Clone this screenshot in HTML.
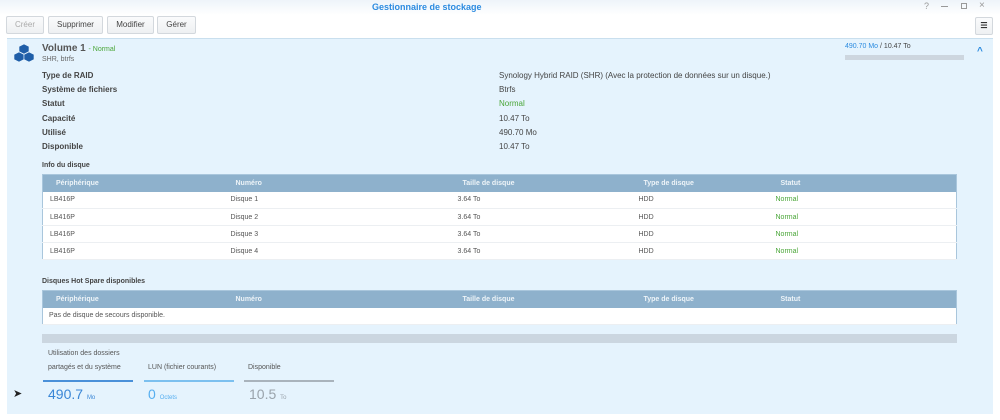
<!DOCTYPE html>
<html><head><meta charset="utf-8"><style>
*{margin:0;padding:0;box-sizing:border-box}
body{width:1000px;height:420px;background:#fff;font-family:"Liberation Sans",Verdana,sans-serif;font-size:8px;color:#444;position:relative;overflow:hidden}
.a{position:absolute;white-space:nowrap}
.top{position:absolute;left:0;top:0;width:1000px;height:15px;background:linear-gradient(#eef4fa,#fff)}
.btn{position:absolute;top:16px;height:18px;border:1px solid #d3d8dd;background:linear-gradient(#fafbfc,#eef0f2);border-radius:2px;font-size:8px;color:#444;text-align:center;line-height:16px}
.panel{position:absolute;left:7px;top:38px;width:986px;height:376px;background:#e5f3fd;border-top:1px solid #c9dfee}
.b{font-weight:bold;color:#444}
table{border-collapse:collapse;position:absolute;left:42px;width:915px;background:#fff;border:1px solid #a9c6dc;font-size:7px;table-layout:fixed}
th{background:#8eb1cc;color:#eef4f8;font-weight:bold;text-align:left;height:17px;padding:0 0 0 5px}
td{height:17px;border-bottom:1px solid #eceff2;padding:0;color:#555}
.g{color:#4aa638}
</style></head><body>
<div class="top"></div>
<div class="a" style="left:372px;top:2px;font-size:9px;font-weight:bold;color:#2c8be0">Gestionnaire de stockage</div>
<div class="a" style="left:924px;top:1px;color:#999;font-size:9px">?</div>
<div class="a" style="left:941px;top:6px;width:7px;height:1px;background:#999"></div>
<div class="a" style="left:961px;top:3px;width:6px;height:6px;border:1px solid #999"></div>
<div class="a" style="left:979px;top:0px;color:#999;font-size:10px">×</div>
<div class="btn" style="left:6px;width:38px;color:#aaa">Créer</div>
<div class="btn" style="left:48px;width:55px">Supprimer</div>
<div class="btn" style="left:107px;width:47px">Modifier</div>
<div class="btn" style="left:157px;width:39px">Gérer</div>
<div class="btn" style="left:975px;width:18px;top:17px;font-weight:bold;color:#333">☰</div>
<div class="panel"></div>
<svg class="a" style="left:13px;top:44px" width="22" height="20" viewBox="0 0 22 20"><g fill="#1f5ea8" stroke="#e5f3fd" stroke-width="0.6"><path d="M11 0l5 2.5v5l-5 2.5-5-2.5v-5z"/><path d="M6 8l5 2.5v5l-5 2.5-5-2.5v-5z"/><path d="M16 8l5 2.5v5l-5 2.5-5-2.5v-5z"/></g></svg>
<div class="a" style="left:42px;top:43px;font-size:10px;font-weight:bold;color:#555">Volume 1 <span style="font-size:7px;color:#4aa638;font-weight:normal">- Normal</span></div>
<div class="a" style="left:42px;top:56px;color:#666;font-size:7px">SHR, btrfs</div>
<div class="a b" style="left:42px;top:71px">Type de RAID</div>
<div class="a b" style="left:42px;top:85px">Système de fichiers</div>
<div class="a b" style="left:42px;top:99px">Statut</div>
<div class="a b" style="left:42px;top:114px">Capacité</div>
<div class="a b" style="left:42px;top:128px">Utilisé</div>
<div class="a b" style="left:42px;top:142px">Disponible</div>
<div class="a" style="left:499px;top:71px">Synology Hybrid RAID (SHR) (Avec la protection de données sur un disque.)</div>
<div class="a" style="left:499px;top:85px">Btrfs</div>
<div class="a g" style="left:499px;top:99px">Normal</div>
<div class="a" style="left:499px;top:114px">10.47 To</div>
<div class="a" style="left:499px;top:128px">490.70 Mo</div>
<div class="a" style="left:499px;top:142px">10.47 To</div>
<div class="a" style="left:845px;top:43px;font-size:7px"><span style="color:#2c8be0">490.70 Mo</span> / 10.47 To</div>
<div class="a" style="left:845px;top:55px;width:119px;height:5px;background:#cdd6df"></div>
<div class="a" style="left:977px;top:46px;color:#2c8be0;font-size:10px;font-weight:bold">^</div>
<div class="a b" style="left:42px;top:162px;font-size:7px">Info du disque</div>
<table style="top:174px">
<colgroup><col style="width:188px"><col style="width:227px"><col style="width:181px"><col style="width:137px"><col></colgroup>
<tr><th style="padding-left:13px">Périphérique</th><th>Numéro</th><th>Taille de disque</th><th>Type de disque</th><th>Statut</th></tr>
<tr><td style="padding-left:7px">LB416P</td><td>Disque 1</td><td>3.64 To</td><td>HDD</td><td class="g">Normal</td></tr>
<tr><td style="padding-left:7px">LB416P</td><td>Disque 2</td><td>3.64 To</td><td>HDD</td><td class="g">Normal</td></tr>
<tr><td style="padding-left:7px">LB416P</td><td>Disque 3</td><td>3.64 To</td><td>HDD</td><td class="g">Normal</td></tr>
<tr><td style="padding-left:7px">LB416P</td><td>Disque 4</td><td>3.64 To</td><td>HDD</td><td class="g">Normal</td></tr>
</table>
<div class="a b" style="left:42px;top:278px;font-size:7px">Disques Hot Spare disponibles</div>
<table style="top:290px">
<colgroup><col style="width:188px"><col style="width:227px"><col style="width:181px"><col style="width:137px"><col></colgroup>
<tr><th style="padding-left:13px">Périphérique</th><th>Numéro</th><th>Taille de disque</th><th>Type de disque</th><th>Statut</th></tr>
<tr><td colspan="5" style="padding-left:6px">Pas de disque de secours disponible.</td></tr>
</table>
<div class="a" style="left:42px;top:334px;width:915px;height:9px;background:#cbd6e0"></div>
<div class="a" style="left:48px;top:350px;font-size:7px;color:#555">Utilisation des dossiers</div>
<div class="a" style="left:48px;top:364px;font-size:7px;color:#555">partagés et du système</div>
<div class="a" style="left:148px;top:364px;font-size:7px;color:#555">LUN (fichier courants)</div>
<div class="a" style="left:248px;top:364px;font-size:7px;color:#555">Disponible</div>
<div class="a" style="left:43px;top:380px;width:90px;height:2px;background:#4a90d9"></div>
<div class="a" style="left:144px;top:380px;width:90px;height:2px;background:#7cc0ef"></div>
<div class="a" style="left:244px;top:380px;width:90px;height:2px;background:#a9b3bc"></div>
<div class="a" style="left:48px;top:386px;font-size:14px;color:#3a86d6">490.7 <span style="font-size:6px">Mo</span></div>
<div class="a" style="left:148px;top:386px;font-size:14px;color:#55aef0">0 <span style="font-size:6px">Octets</span></div>
<div class="a" style="left:249px;top:386px;font-size:14px;color:#9aa3ab">10.5 <span style="font-size:6px">To</span></div>
<div class="a" style="left:13px;top:387px;font-size:11px;color:#222">➤</div>
</body></html>
